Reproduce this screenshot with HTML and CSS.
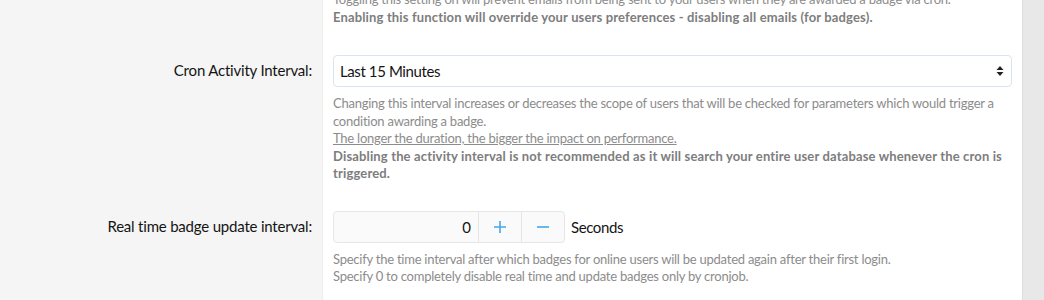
FILE: index.html
```html
<!DOCTYPE html>
<html lang="en">
<head>
    <meta charset="UTF-8">
    <meta name="viewport" content="width=device-width, initial-scale=1.0">
    <title>Badge Options</title>
    <link rel="stylesheet" href="styles.css">
</head>
<body>

<div class="page">
    <div class="main">
        <dl class="form-row first">
            <dt></dt>
            <dd>
                <div class="hint">
                    Toggling this setting on will prevent emails from being sent to your users when they are awarded a badge via cron.<br>
                    <b>Enabling this function will override your users preferences - disabling all emails (for badges).</b>
                </div>
            </dd>
        </dl>

        <dl class="form-row">
            <dt><label>Cron Activity Interval:</label></dt>
            <dd>
                <div class="select">
                    <span>Last 15 Minutes</span>
                    <svg width="8" height="12" viewBox="0 0 8 12">
                        <path d="M4 1 L7.5 5 L0.5 5 Z M4 11 L7.5 7 L0.5 7 Z" fill="#222"/>
                    </svg>
                </div>
                <div class="hint">
                    Changing this interval increases or decreases the scope of users that will be checked for parameters which would trigger a condition awarding a badge.<br>
                    <u>The longer the duration, the bigger the impact on performance.</u><br>
                    <b>Disabling the activity interval is not recommended as it will search your entire user database whenever the cron is triggered.</b>
                </div>
            </dd>
        </dl>

        <dl class="form-row">
            <dt><label>Real time badge update interval:</label></dt>
            <dd>
                <div class="number-line">
                    <div class="input-group">
                        <input type="text" class="number" value="0">
                        <button type="button" class="step">
                            <svg width="14" height="14" viewBox="0 0 14 14">
                                <path d="M7 1 V13 M1 7 H13" stroke="#47a7eb" stroke-width="1.6"/>
                            </svg>
                        </button>
                        <button type="button" class="step">
                            <svg width="14" height="14" viewBox="0 0 14 14">
                                <path d="M1 7 H13" stroke="#47a7eb" stroke-width="1.6"/>
                            </svg>
                        </button>
                    </div>
                    <span class="units">Seconds</span>
                </div>
                <div class="hint">
                    Specify the time interval after which badges for online users will be updated again after their first login.<br>
                    Specify 0 to completely disable real time and update badges only by cronjob.
                </div>
            </dd>
        </dl>
    </div>
    <div class="scroll"></div>
</div>

</body>
</html>
```

FILE: styles.css
```css
body {
    margin: 0;
    background-color: #fff;
    font-family: Lato, "Open Sans", sans-serif;
    color: #141414;
    overflow: hidden;
}
.page {
    display: flex;
    height: 300px;
}
.main {
    width: 1022px;
    margin-top: -9px;
}
.scroll {
    flex: 1;
    background-color: #e8e8e8;
    border-left: 1px solid #dedede;
}
.form-row {
    display: grid;
    grid-template-columns: 323px 1fr;
    margin: 0;
}
.form-row dt {
    background-color: #f5f5f5;
    border-right: 1px solid #ededed;
    text-align: right;
    padding: 10px 10px 0 0;
    font-size: 15px;
    letter-spacing: -0.2px;
}
.form-row dt label {
    display: block;
    line-height: 31px;
}
.form-row dd {
    margin: 0;
    padding: 10px 10px 18px 10px;
}
.form-row.first dd {
    padding-top: 0;
    padding-bottom: 19px;
}
.hint {
    font-size: 13px;
    line-height: 17.5px;
    color: #8c8c8c;
    margin-top: 8px;
    letter-spacing: -0.24px;
}
.form-row.first .hint {
    margin-top: 0;
}
.hint b {
    color: #7d7d7d;
    letter-spacing: 0.15px;
}
.select {
    display: flex;
    align-items: center;
    justify-content: space-between;
    height: 30px;
    padding: 0 7px 0 6px;
    border: 1px solid #dae4ee;
    border-radius: 4px;
    font-size: 15px;
    letter-spacing: -0.4px;
}
.number-line {
    display: flex;
    align-items: center;
    gap: 6px;
}
.input-group {
    display: flex;
    height: 32px;
    box-sizing: border-box;
    border: 1px solid #e6e6e6;
    border-radius: 4px;
    background-color: #fafafa;
}
.number {
    width: 137px;
    border: none;
    background: none;
    text-align: right;
    font-family: inherit;
    font-size: 15px;
    color: #141414;
    padding: 0 7px 0 0;
    outline: none;
}
.step {
    width: 43px;
    border: none;
    border-left: 1px solid #e6e6e6;
    background: none;
    padding: 0;
    display: flex;
    align-items: center;
    justify-content: center;
}
.units {
    font-size: 15px;
    letter-spacing: -0.4px;
}
```
